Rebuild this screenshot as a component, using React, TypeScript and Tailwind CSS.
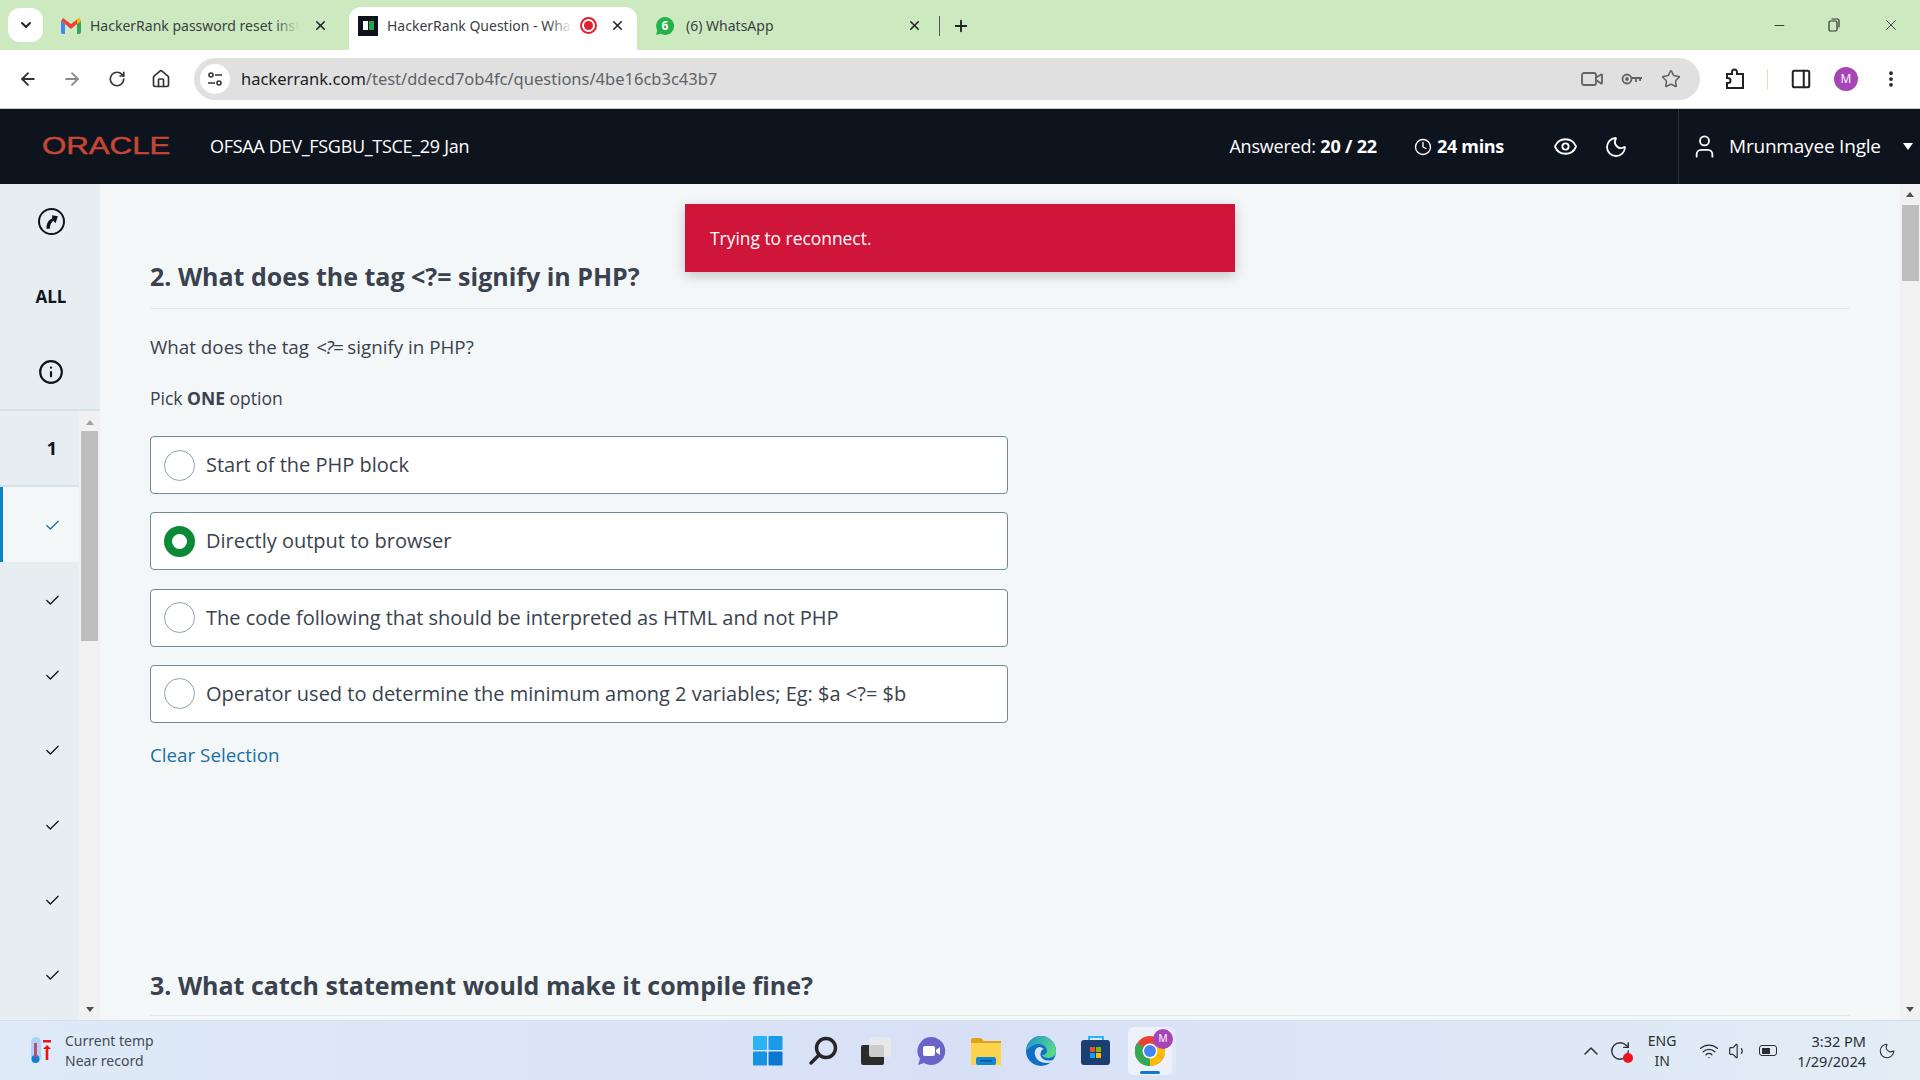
import { ArrowLeft, ArrowRight, Check, ChevronDown, ChevronUp, Clock, Eye, Home, Info, Minus, Moon, MoreVertical, PanelRight, Plus, RotateCw, Star, User, Video, Volume1, Wifi, X } from 'lucide-react'

const OPTIONS = [
  { label: 'Start of the PHP block' },
  { label: 'Directly output to browser', selected: true },
  { label: 'The code following that should be interpreted as HTML and not PHP' },
  { label: 'Operator used to determine the minimum among 2 variables; Eg: $a <?= $b' },
]

function Tab({ icon, title, extra, className, fade, gap = 'mr-[9px]' }: { icon: React.ReactNode; title: string; extra?: React.ReactNode; className: string; fade?: string; gap?: string }) {
  return (
    <div className={`h-[43px] pb-[6px] flex items-center rounded-t-xl text-[14px] text-[#3c4043] ${className}`}>
      <div className={`w-5 h-5 ${gap} shrink-0 flex items-center justify-center`}>{icon}</div>
      <span className="relative flex-1 overflow-hidden whitespace-nowrap">
        {title}
        {fade && <span className={`absolute right-0 top-0 bottom-0 w-6 bg-gradient-to-r from-transparent ${fade}`} />}
      </span>
      {extra}
      <X size={15} strokeWidth={2.5} className="ml-[14px] shrink-0 text-[#222]" />
    </div>
  )
}

function Gmail() {
  return (
    <svg width="20" height="16" viewBox="0 0 20 16">
      <path d="M0 3v11a2 2 0 0 0 2 2h2V6z" fill="#4285f4" />
      <path d="M20 3v11a2 2 0 0 1-2 2h-2V6z" fill="#34a853" />
      <path d="M0 3l4 3 6 5 6-5 4-3-2-3-8 6-8-6z" fill="#ea4335" />
      <path d="M16 6l4-3-2-3-2 1.5z" fill="#fbbc04" />
    </svg>
  )
}

function Taskbar() {
  return (
    <footer className="h-[60px] shrink-0 flex items-center border-t border-[#d5dfec] bg-gradient-to-r from-[#dfeaf8] via-[#d8e0f6] to-[#e2edf6] text-[#454b52]" style={{ fontFamily: '"Noto Sans", sans-serif' }}>
      <div className="w-[400px] flex items-center pl-[28px]">
        <svg width="26" height="30" viewBox="0 0 26 30">
          <rect x="3" y="1" width="10" height="25" rx="5" fill="#a8d4f8" />
          <circle cx="7.5" cy="23" r="4" fill="#0f7fd8" />
          <rect x="6" y="7" width="3" height="14" fill="#c9476b" />
          <rect x="15" y="4" width="8" height="2.5" fill="#f01010" />
          <path d="M19 9l-4 4h2.7v11h2.6V13H23z" fill="#f01010" />
        </svg>
        <div className="ml-[11px] text-[14px] leading-[20px]">
          <div>Current temp</div>
          <div>Near record</div>
        </div>
      </div>

      <div className="flex items-center ml-[340px]">
        <div className="w-[56px] flex justify-center">
          <svg width="30" height="30" viewBox="0 0 30 30">
            <rect x="0" y="0" width="14" height="14" rx="1" fill="#2bb3f3" />
            <rect x="15.5" y="0" width="14" height="14" rx="1" fill="#1a9ae8" />
            <rect x="0" y="15.5" width="14" height="14" rx="1" fill="#1793e3" />
            <rect x="15.5" y="15.5" width="14" height="14" rx="1" fill="#0a78d0" />
          </svg>
        </div>
        <div className="w-[54px] flex justify-center">
          <svg width="30" height="30" viewBox="0 0 30 30" fill="none" stroke="#262626" strokeWidth="3.4" strokeLinecap="round">
            <circle cx="18" cy="12" r="9.5" />
            <path d="M11 19l-8 8" />
          </svg>
        </div>
        <div className="w-[52px] flex justify-center">
          <svg width="30" height="28" viewBox="0 0 30 28">
            <rect x="0" y="8" width="23" height="20" rx="2" fill="#2b2b2b" />
            <rect x="8" y="0" width="22" height="20" rx="2" fill="#e9e9e9" fillOpacity="0.85" />
          </svg>
        </div>
        <div className="w-[58px] flex justify-center">
          <svg width="30" height="30" viewBox="0 0 30 30">
            <path d="M15 1a14 14 0 1 1-7 26l-6 2 2-6A14 14 0 0 1 15 1z" fill="#6a64c8" />
            <rect x="7" y="10" width="12" height="10" rx="2" fill="#fff" />
            <path d="M20 14l4-3v8l-4-3z" fill="#fff" />
          </svg>
        </div>
        <div className="w-[52px] flex justify-center">
          <svg width="30" height="28" viewBox="0 0 30 28">
            <path d="M0 3a2 2 0 0 1 2-2h8l3 3h17v6H0z" fill="#dfa41a" />
            <path d="M0 6h30v22H0z" fill="#fcd34d" />
            <rect x="5" y="20" width="20" height="8" rx="2" fill="#0f86d6" />
            <rect x="9" y="23" width="12" height="1.5" fill="#084f8a" />
          </svg>
        </div>
        <div className="w-[58px] flex justify-center">
          <svg width="30" height="30" viewBox="0 0 30 30">
            <defs>
              <linearGradient id="edgeTop" x1="0" y1="0" x2="1" y2="0.4">
                <stop offset="0" stopColor="#1a90d8" />
                <stop offset="1" stopColor="#55d98a" />
              </linearGradient>
            </defs>
            <circle cx="15" cy="15" r="15" fill="#0f6fc4" />
            <path d="M15 0a15 15 0 0 1 15 15c0 5-4 7-8 7-5 0-6-3-6-3 3 0 5-2 5-4 0-4-4-7-8-7-5 0-9 3-13 7C2 5 8 0 15 0z" fill="url(#edgeTop)" />
            <path d="M14 11c-4 0-6 4-5 8 1 5 6 8 12 8 3 0 6-1 8-4-3 2-9 2-12 0-3-3-3-5-2-7 0-2 2-3 3-3z" fill="#dce4f6" />
          </svg>
        </div>
        <div className="w-[52px] flex justify-center">
          <svg width="30" height="30" viewBox="0 0 30 30">
            <path d="M8 5V1h14v4" fill="none" stroke="#29b6f6" strokeWidth="2" />
            <rect x="0" y="4" width="29" height="25" rx="3" fill="#1b3f73" />
            <rect x="9" y="11" width="5" height="5" fill="#f25022" />
            <rect x="15" y="11" width="5" height="5" fill="#7fba00" />
            <rect x="9" y="17" width="5" height="5" fill="#00a4ef" />
            <rect x="15" y="17" width="5" height="5" fill="#ffb900" />
          </svg>
        </div>
        <div className="relative w-[44px] h-[48px] ml-[6px] flex items-center justify-center rounded-md bg-[#eef1fa] shadow-[4px_0_0_#e4e8f6]">
          <svg width="30" height="30" viewBox="0 0 30 30">
            <circle cx="15" cy="15" r="15" fill="#ea4335" />
            <path d="M15 15l13 7a15 15 0 0 1-13 8z" fill="#fbbc04" />
            <path d="M28 6a15 15 0 0 1 0 16l-13-7z" fill="#fbbc04" />
            <path d="M15 30A15 15 0 0 1 2 7l13 8z" fill="#34a853" />
            <circle cx="15" cy="15" r="7.5" fill="#fff" />
            <circle cx="15" cy="15" r="6" fill="#4285f4" />
          </svg>
          <div className="absolute -right-[1px] top-[2px] w-5 h-5 rounded-full bg-[#a644b8] text-white text-[10px] flex items-center justify-center">M</div>
          <div className="absolute bottom-[1px] left-[12px] w-5 h-[3px] rounded bg-[#0f7bd0]" />
        </div>
      </div>

      <div className="ml-auto flex items-center text-[#2b2f33]">
        <ChevronUp size={24} strokeWidth={1.5} />
        <div className="relative ml-[6px]">
          <RotateCw size={22} strokeWidth={1.5} />
          <div className="absolute -right-[2px] -bottom-[1px] w-[10px] h-[10px] rounded-full bg-[#ee1122]" />
        </div>
        <div className="ml-[15px] w-[32px] text-center text-[14px] leading-[20px]">
          <div>ENG</div>
          <div>IN</div>
        </div>
        <Wifi size={20} strokeWidth={1.6} className="ml-[21px]" />
        <Volume1 size={20} strokeWidth={1.4} className="ml-[9px]" />
        <div className="ml-[11px] w-[18px] h-[11px] border-[1.5px] border-[#2b2f33] rounded-[3px] p-[1.5px]">
          <div className="h-full w-[8px] bg-[#2b2f33]" />
        </div>
        <div className="ml-[20px] text-right text-[14.5px] leading-[20px]">
          <div>3:32 PM</div>
          <div>1/29/2024</div>
        </div>
        <Moon size={18} strokeWidth={1.4} className="ml-[12px] mr-[24px]" />
      </div>
    </footer>
  )
}

export default function App() {
  return (
    <div className="h-screen flex flex-col overflow-hidden bg-white" style={{ fontFamily: '"Open Sans", sans-serif' }}>
      {/* Chrome tabs */}
      <div className="h-[50px] shrink-0 bg-[#cce9c0] flex items-end relative" style={{ fontFamily: '"Noto Sans", sans-serif' }}>
        <div className="absolute left-[8px] top-[8px] w-[35px] h-[34px] rounded-xl bg-white flex items-center justify-center">
          <ChevronDown size={16} strokeWidth={3} className="text-[#222]" />
        </div>
        <div className="flex items-end ml-[49px]">
          <Tab className="w-[300px] pl-3 pr-[21px]" title="HackerRank password reset inst" icon={<Gmail />} fade="to-[#cce9c0]" />
          <Tab className="w-[288px] pl-[9px] pr-[12px] bg-white" title="HackerRank Question - Wha" fade="to-white" icon={
            <div className="w-5 h-5 bg-[#0e141e] flex items-center justify-center gap-[1px] text-[#fff]">
              <div className="w-[5px] h-[9px] bg-white" />
              <div className="w-[5px] h-[9px] bg-[#1ba94c]" />
            </div>
          } extra={
            <div className="ml-[8px] -mr-[1px] w-[17px] h-[17px] rounded-full border-2 border-[#e02030] flex items-center justify-center shrink-0">
              <div className="w-[9px] h-[9px] rounded-full bg-[#e02030]" />
            </div>
          } />
          <Tab className="w-[301px] pl-[18px] pr-[16px]" gap="mr-[11px]" title="(6) WhatsApp" icon={
            <svg width="20" height="20" viewBox="0 0 20 20">
              <path d="M10 1a9 9 0 1 1-4.4 16.8L1 19l1.3-4.5A9 9 0 0 1 10 1z" fill="#25b24a" />
              <text x="10" y="14" textAnchor="middle" fontSize="12" fontWeight="700" fill="#fff" fontFamily="Noto Sans, sans-serif">6</text>
            </svg>
          } />
          <div className="w-px h-5 bg-[#555] mb-[14px] ml-[1px]" />
          <Plus size={18} strokeWidth={2.5} className="ml-[12px] mb-[15px] text-[#222]" />
        </div>
        <div className="ml-auto flex items-center self-center text-[#333]">
          <Minus size={15} strokeWidth={1.5} />
          <svg width="14" height="14" viewBox="0 0 14 14" fill="none" stroke="#333" strokeWidth="1.2" className="ml-[40px]">
            <rect x="2" y="3" width="8" height="10" rx="1.5" />
            <path d="M4.5 1h6a1.5 1.5 0 0 1 1.5 1.5v7" />
          </svg>
          <X size={18} strokeWidth={1.2} className="ml-[41px] mr-[20px]" />
        </div>
      </div>

      {/* Chrome toolbar */}
      <div className="h-[59px] shrink-0 flex items-center bg-white border-b border-[#c9cccf] text-[#333]">
        <ArrowLeft size={20} strokeWidth={2.2} className="ml-[18px]" />
        <ArrowRight size={20} strokeWidth={2.2} className="ml-[24px] text-[#8a8a8a]" />
        <RotateCw size={18} strokeWidth={2.2} className="ml-[26px]" />
        <Home size={20} strokeWidth={2} className="ml-[25px]" />
        <div className="ml-[23px] w-[1506px] h-[42px] rounded-full bg-[#e0e0e0] flex items-center pl-[6px] pr-[19px] text-[#5f6368]">
          <div className="w-[30px] h-[30px] rounded-full bg-white flex items-center justify-center shrink-0">
            <svg width="16" height="16" viewBox="0 0 16 16" fill="none" stroke="#333" strokeWidth="1.6">
              <circle cx="4" cy="4" r="2" />
              <path d="M8 4h7M1 12h7" />
              <circle cx="12" cy="12" r="2" />
            </svg>
          </div>
          <div className="ml-[11px] flex-1 text-[16.5px] whitespace-nowrap" style={{ fontFamily: '"Noto Sans", sans-serif' }}>
            <span className="text-[#202124]">hackerrank.com</span>/test/ddecd7ob4fc/questions/4be16cb3c43b7
          </div>
          <Video size={24} strokeWidth={1.8} />
          <svg width="22" height="14" viewBox="0 0 22 14" fill="none" stroke="#5f6368" strokeWidth="1.8" className="ml-[17px]">
            <circle cx="6" cy="7" r="4.5" />
            <circle cx="6" cy="7" r="1" />
            <path d="M10.5 6H21M15 6v4M19 6v3" />
          </svg>
          <Star size={20} strokeWidth={1.8} className="ml-[18px]" />
        </div>
        <svg width="22" height="22" viewBox="0 0 22 22" fill="none" stroke="#222" strokeWidth="2" className="ml-[24px]">
          <path d="M3 6h5V4a2.5 2.5 0 0 1 5 0v2h6v14H3v-5h1a2.5 2.5 0 0 0 0-5H3z" />
        </svg>
        <div className="ml-[21px] w-px h-[20px] bg-[#cce9c0]" />
        <PanelRight size={22} strokeWidth={2.2} className="ml-[22px] text-[#222]" />
        <div className="ml-[22px] w-6 h-6 rounded-full bg-[#a644b8] text-white text-[12px] flex items-center justify-center">M</div>
        <MoreVertical size={20} strokeWidth={2.5} className="ml-[23px] text-[#222]" />
      </div>

      {/* HackerRank header */}
      <header className="h-[75px] shrink-0 bg-[#0e141e] text-white flex items-center text-[18px]">
        <div className="ml-[42px] w-[134px] shrink-0">
          <span className="inline-block origin-left scale-x-[1.3] text-[24px] leading-[26px] text-[#c74634] [-webkit-text-stroke:0.5px_#c74634]" style={{ fontFamily: '"Liberation Sans", sans-serif' }}>ORACLE</span>
        </div>
        <span className="ml-[34px] tracking-[-0.3px]">OFSAA DEV_FSGBU_TSCE_29 Jan</span>
        <span className="ml-auto tracking-[-0.2px]">Answered: <b>20 / 22</b></span>
        <Clock size={18} strokeWidth={1.8} className="ml-[37px]" />
        <b className="ml-[5px] tracking-[-0.3px]">24 mins</b>
        <Eye size={25} strokeWidth={1.8} className="ml-[49px]" />
        <Moon size={24} strokeWidth={1.8} className="ml-[26px]" />
        <div className="ml-[50px] h-full w-[242px] border-l border-[#2a3038] flex items-center pl-[12px]">
          <User size={27} strokeWidth={1.6} />
          <span className="ml-[11px] text-[19px] tracking-[-0.2px]">Mrunmayee Ingle</span>
          <div className="ml-auto mr-[7px] w-0 h-0 border-l-[5px] border-r-[5px] border-t-[7px] border-l-transparent border-r-transparent border-t-white" />
        </div>
      </header>

      <div className="flex-1 min-h-0 flex relative">
        {/* Sidebar */}
        <aside className="w-[100px] shrink-0 bg-[#e7eef1] flex flex-col text-[#0e141e]">
          <div className="h-[75px] pl-[2px] flex items-center justify-center">
            <div className="w-[27px] h-[27px] rounded-full border-2 border-[#0e141e] flex items-center justify-center">
              <svg width="16" height="16" viewBox="0 0 14 14"><path d="M3 13c0-5 2-8 5-9V1l5 1-2 6-2-2c-1 1-3 3-3 7z" fill="#0e141e" /></svg>
            </div>
          </div>
          <div className="h-[75px] pl-[2px] flex items-center justify-center text-[17px] font-bold">ALL</div>
          <div className="h-[75px] pl-[2px] flex items-center justify-center"><Info size={26} strokeWidth={2} /></div>
          <div className="flex-1 min-h-0 flex border-t-2 border-[#d9e0e3]">
            <div className="w-[79px] flex flex-col">
              <div className="h-[76px] shrink-0 pl-[25px] flex items-center justify-center font-bold text-[18px] border-b-2 border-[#d9e0e3]">1</div>
              <div className="h-[75px] shrink-0 pl-[22px] pt-[2px] flex items-center justify-center bg-[#f3f7f7] border-l-[3px] border-[#0b82c6]">
                <Check size={17} strokeWidth={1.8} className="text-[#1a6fa3]" />
              </div>
              {[0, 1, 2, 3, 4, 5].map(i => (
                <div key={i} className="h-[75px] shrink-0 pl-[25px] pt-[2px] flex items-center justify-center"><Check size={17} strokeWidth={1.8} /></div>
              ))}
            </div>
            <div className="w-[21px] bg-[#f1f1f1] flex flex-col items-center relative">
              <div className="mt-[9px] w-0 h-0 border-l-[4px] border-r-[4px] border-b-[5px] border-l-transparent border-r-transparent border-b-[#a3a3a3]" />
              <div className="mt-[6px] w-[17px] h-[210px] bg-[#bdbdbd]" />
              <div className="mt-auto mb-[8px] w-0 h-0 border-l-[4px] border-r-[4px] border-t-[5px] border-l-transparent border-r-transparent border-t-[#505050]" />
            </div>
          </div>
        </aside>

        {/* Questions */}
        <main className="flex-1 min-w-0 bg-[#f3f7f7] pl-[50px] pr-[50px] pt-[74px] overflow-hidden text-[#39424e]">
          <h2 className="text-[25px] leading-[36px] font-bold pb-[14px] border-b border-[#e0e9e9]">2. What does the tag &lt;?= signify in PHP?</h2>
          <p className="mt-[24px] text-[18.8px] leading-[28px]">What does the tag <i className="ml-[2px] tracking-[-1px]" style={{ fontFamily: '"Noto Sans", sans-serif' }}>&lt;?=</i> signify in PHP?</p>
          <p className="mt-[23px] text-[17.5px] leading-[28px]">Pick <b>ONE</b> option</p>
          <div className="mt-[24px] w-[858px] flex flex-col gap-[18.33px]">
            {OPTIONS.map(o => (
              <div key={o.label} className="h-[58px] flex items-center bg-white rounded-[4px] border border-[#6f8b95] pl-[13px] text-[20px]">
                {o.selected
                  ? <div className="w-[31px] h-[31px] rounded-full bg-white border-[8px] border-[#0a8a36] shrink-0" />
                  : <div className="w-[31px] h-[31px] rounded-full bg-white border border-[#8ea3aa] shrink-0" />}
                <span className="ml-[11px]">{o.label}</span>
              </div>
            ))}
          </div>
          <div className="mt-[18px] text-[18.8px] leading-[28px] text-[#1a6fa3]">Clear Selection</div>
          <h2 className="mt-[198px] text-[25px] leading-[36px] font-bold pb-[12px] border-b border-[#e0e9e9]">3. What catch statement would make it compile fine?</h2>
        </main>

        {/* Page scrollbar */}
        <div className="w-5 shrink-0 bg-[#f1f1f1] flex flex-col items-center">
          <div className="mt-[8px] w-0 h-0 border-l-[4px] border-r-[4px] border-b-[5px] border-l-transparent border-r-transparent border-b-[#505050]" />
          <div className="mt-[8px] w-[17px] h-[76px] bg-[#bdbdbd]" />
          <div className="mt-auto mb-[8px] w-0 h-0 border-l-[4px] border-r-[4px] border-t-[5px] border-l-transparent border-r-transparent border-t-[#505050]" />
        </div>

        {/* Toast */}
        <div className="absolute left-[685px] top-[20px] w-[550px] h-[68px] bg-[#d0153a] text-white text-[17.4px] flex items-center pl-[25px] shadow-[0_4px_12px_rgba(0,0,0,0.2)]">
          Trying to reconnect.
        </div>
      </div>

      <Taskbar />
    </div>
  )
}
